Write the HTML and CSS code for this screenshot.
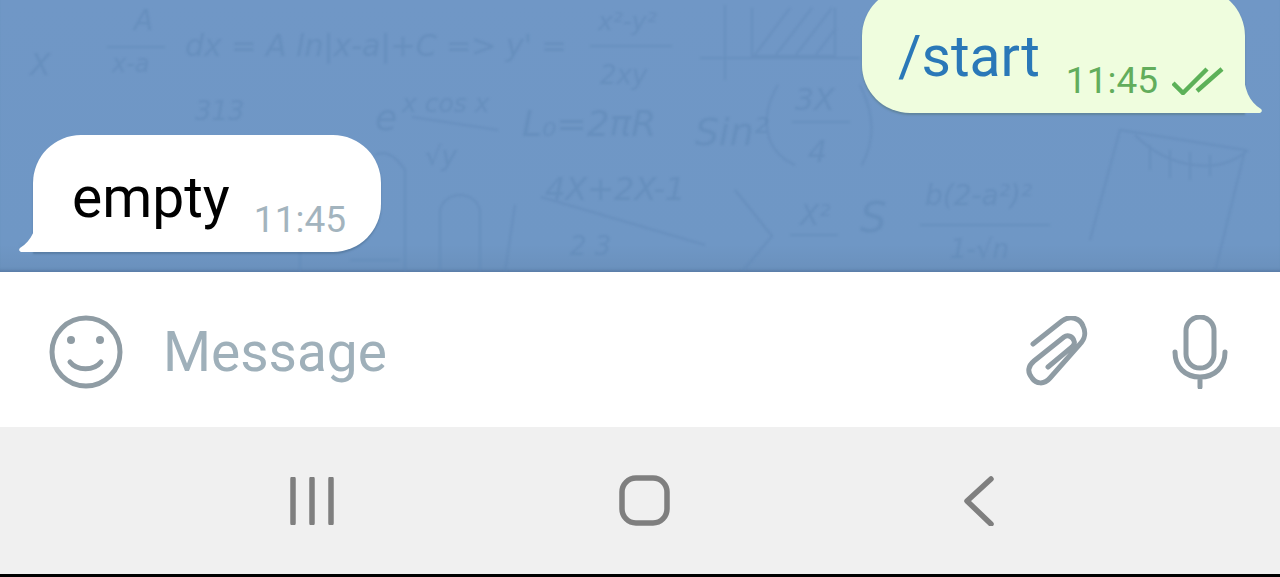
FILE: index.html
```html
<!DOCTYPE html>
<html lang="en">
  <head>
    <meta charset="UTF-8" />
    <title>Chat</title>
    <link rel="stylesheet" href="styles.css">
  </head>
  <body>
    <div class="chat">
      <!-- wallpaper doodles -->
      <svg class="doodles" viewBox="0 0 1280 272" width="1280" height="272">
        <g class="doodle-text">
          <text x="134" y="30" font-size="28">A</text>
          <text x="112" y="72" font-size="24">x-a</text>
          <text x="185" y="56" font-size="30">dx = A ln|x-a|+C =&gt; y' =</text>
          <text x="598" y="30" font-size="25">x²-y²</text>
          <text x="600" y="84" font-size="26">2xy</text>
          <text x="375" y="130" font-size="36">e</text>
          <text x="402" y="112" font-size="25">x cos x</text>
          <text x="425" y="165" font-size="26">√y</text>
          <text x="522" y="136" font-size="36">L₀=2πR</text>
          <text x="695" y="145" font-size="38">Sin²</text>
          <text x="795" y="110" font-size="30">3X</text>
          <text x="808" y="162" font-size="30">4</text>
          <text x="545" y="200" font-size="32">4X+2X-1</text>
          <text x="570" y="255" font-size="26">2 3</text>
          <text x="800" y="225" font-size="28">X²</text>
          <text x="860" y="232" font-size="42">S</text>
          <text x="925" y="205" font-size="28">b(2-a²)²</text>
          <text x="950" y="258" font-size="26">1-√n</text>
          <text x="195" y="120" font-size="26">313</text>
          <text x="30" y="75" font-size="30">X</text>
        </g>
        <g class="doodle-lines">
          <path d="M107 47H165M590 46H672M412 117L498 130M700 58H860M725 5V80M752 8V56H835V8" />
          <path d="M754 56L790 8M775 56L812 8M795 56L832 8M815 56L836 28" />
          <path d="M792 122H850M541 197L705 245M735 190L772 236L742 272M790 235H838M920 225H1050" />
          <path d="M778 85C760 115 762 150 795 165M860 85C875 115 875 140 862 165" />
          <path d="M440 272V210C445 190 475 190 480 210V272M405 272V170C395 155 385 150 375 155M505 272L515 205" />
          <path d="M1090 240L1120 130L1245 150L1215 272M1135 135C1170 170 1220 175 1248 150M1150 145V170M1170 150V178M1190 152V180M1210 155V176" />
          <path d="M20 245H110M300 272V252M350 260H400" />
        </g>
      </svg>

      <div class="bubble bubble-out">
        <span class="bubble-text command">/start</span>
        <span class="meta">
          <span class="time">11:45</span>
          <svg class="ticks" viewBox="0 0 52 28" width="52" height="28">
            <path d="M1 16L11 26L35 2M25 24L50 2" />
          </svg>
        </span>
        <svg class="tail tail-out" viewBox="0 0 20 44" width="20" height="44">
          <path d="M0 0C1 20 6 33 18 40C20 42 18 44 16 44H0Z" />
        </svg>
      </div>

      <div class="bubble bubble-in">
        <span class="bubble-text">empty</span>
        <span class="meta">
          <span class="time">11:45</span>
        </span>
        <svg class="tail tail-in" viewBox="0 0 20 44" width="20" height="44">
          <path d="M20 0C19 20 14 33 2 40C0 42 2 44 4 44H20Z" />
        </svg>
      </div>
    </div>

    <div class="input-bar">
      <svg class="emoji-icon" viewBox="0 0 74 74" width="74" height="74">
        <circle class="line-icon" cx="37" cy="37" r="34" />
        <circle class="dot" cx="22" cy="25" r="4" />
        <circle class="dot" cx="51" cy="25" r="4" />
        <path class="line-icon" d="M21 47C28 56 45 56 52 47" />
      </svg>
      <span class="placeholder">Message</span>
      <svg class="clip-icon" viewBox="0 0 64 72" width="64" height="72">
        <path class="line-icon" d="M7 28L36 5C44 -1 54 2 57 10C60 16 59 23 54 28L24 62C18 69 10 68 6 62C1 56 2 50 8 45L38 21C42 18 47 21 48 25C49 27 48 29 46 31L22 51" />
      </svg>
      <svg class="mic-icon" viewBox="0 0 56 74" width="56" height="74">
        <rect class="line-icon" x="14" y="2" width="28" height="51" rx="14" />
        <path class="line-icon" d="M3 37C3 52 13 62 28 62C43 62 53 52 53 37M28 62V72" />
      </svg>
    </div>

    <div class="nav-bar">
      <svg class="nav-recent" viewBox="0 0 48 48" width="48" height="48">
        <path class="nav-line" d="M5 2V46M24 2V46M43 2V46" />
      </svg>
      <svg class="nav-home" viewBox="0 0 53 53" width="53" height="53">
        <rect class="nav-line" x="4" y="4" width="45" height="45" rx="14" />
      </svg>
      <svg class="nav-back" viewBox="0 0 32 50" width="32" height="50">
        <path class="nav-line" d="M28 3L4 25L28 48" />
      </svg>
    </div>
  </body>
</html>
```

FILE: styles.css
```css
* {
  box-sizing: border-box;
}
html,
body {
  margin: 0;
  height: 577px;
  overflow: hidden;
}
body {
  font-family: Roboto, "Liberation Sans", sans-serif;
  background: #fff;
}
svg {
  display: block;
  flex: none;
}

/* chat area */
.chat {
  position: relative;
  height: 272px;
  overflow: hidden;
  display: flex;
  flex-direction: column;
  background: linear-gradient(#7097c6, #6f97c5 90%, #6a90bc);
  box-shadow: inset 0 -4px 3px -2px rgba(60, 90, 130, 0.35);
}
.doodles {
  position: absolute;
  top: 0;
  left: 0;
  filter: blur(1px);
}
.doodle-text {
  fill: #5f87b6;
  opacity: 0.5;
  font-family: "DejaVu Sans", sans-serif;
  font-style: italic;
}
.doodle-lines {
  fill: none;
  stroke: #5f87b6;
  stroke-width: 2;
  opacity: 0.45;
}

/* bubbles */
.bubble {
  position: relative;
  display: flex;
  align-items: flex-end;
  border-radius: 48px;
}
.bubble-out {
  align-self: flex-end;
  margin: -12px 35px 22px 0;
  width: 383px;
  height: 125px;
  padding: 0 21px 10px 36px;
  background: #effdde;
  box-shadow: 0 2px 2px rgba(70, 100, 90, 0.35);
  border-bottom-right-radius: 0;
}
.bubble-in {
  align-self: flex-start;
  margin-left: 33px;
  width: 348px;
  height: 117px;
  padding: 0 35px 10px 39px;
  background: #fff;
  box-shadow: 0 2px 2px rgba(50, 80, 110, 0.35);
  border-bottom-left-radius: 0;
}
.bubble-text {
  font-size: 57px;
  line-height: 64px;
  color: #000;
  margin-bottom: 12px;
}
.command {
  color: #2a78b8;
  margin-bottom: 14px;
}
.meta {
  display: flex;
  align-items: center;
  gap: 14px;
  margin-left: auto;
}
.time {
  font-size: 37px;
  line-height: 44px;
  color: #a3b4be;
}
.bubble-out .time {
  color: #62ad5c;
}
.ticks path {
  fill: none;
  stroke: #5cb158;
  stroke-width: 4.5;
}
.tail {
  position: absolute;
  bottom: 0;
}
.tail-out {
  left: 100%;
  margin-left: -2px;
}
.tail-out path {
  fill: #effdde;
}
.tail-in {
  right: 100%;
  margin-right: -5px;
}
.tail-in path {
  fill: #fff;
}

/* message input */
.input-bar {
  height: 155px;
  display: flex;
  align-items: center;
  padding: 5px 52px 0 49px;
  background: #fff;
}
.placeholder {
  margin-left: 40px;
  font-size: 55px;
  color: #9fb0ba;
}
.line-icon {
  fill: none;
  stroke: #8f9ca4;
  stroke-width: 5;
  stroke-linecap: round;
}
.dot {
  fill: #8f9ca4;
}
.clip-icon {
  margin-left: auto;
}
.mic-icon {
  margin-left: 82px;
}

/* system navigation */
.nav-bar {
  height: 150px;
  display: flex;
  align-items: center;
  padding: 0 0 0 288px;
  background: #f0f0f0;
  border-bottom: 3px solid #000;
}
.nav-line {
  fill: none;
  stroke: #7f7f7f;
  stroke-width: 5.5;
  stroke-linecap: round;
  stroke-linejoin: round;
}
.nav-home {
  margin-left: 282px;
}
.nav-back {
  margin-left: 292px;
}
```
